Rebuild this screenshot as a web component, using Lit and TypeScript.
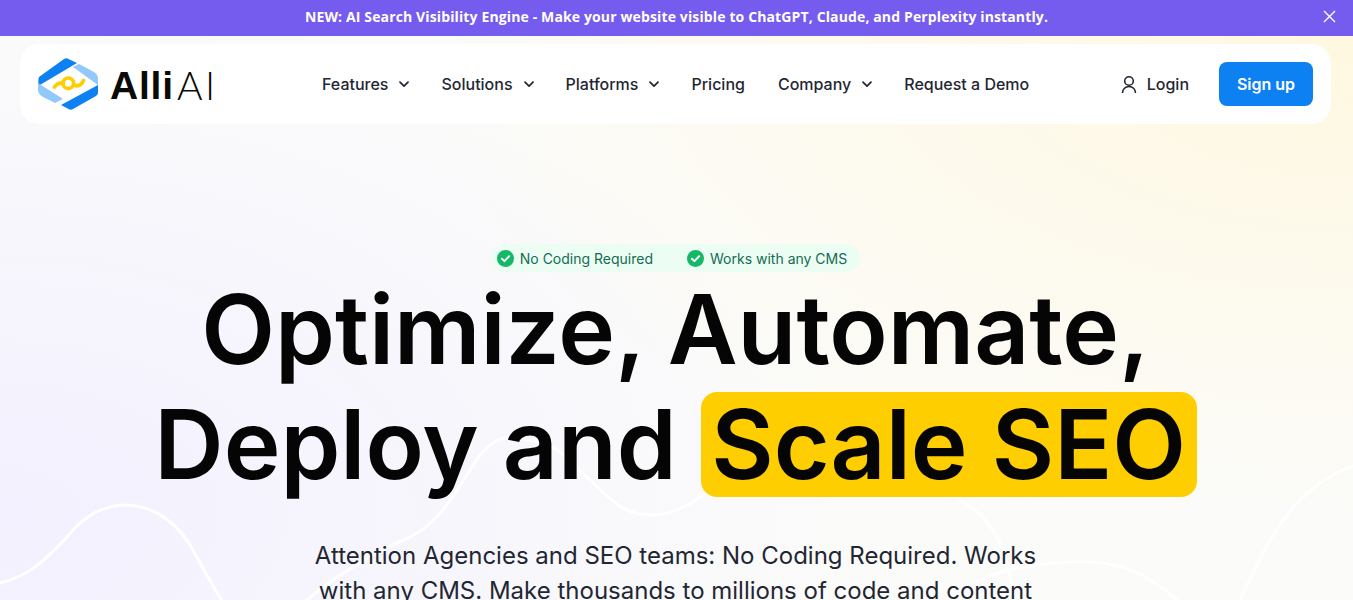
import { LitElement, html, css, svg } from 'lit';
import { customElement } from 'lit/decorators.js';

const chevron = html`<svg class="chev" width="10" height="7" viewBox="0 0 10 7"><path d="M1 1.200 5 5.200l4-4" fill="none" stroke="#1f2733" stroke-width="1.700" stroke-linecap="round" stroke-linejoin="round"/></svg>`;

const check = html`<svg width="17" height="17" viewBox="0 0 16 16"><circle cx="8" cy="8" r="8" fill="#14b866"/><path d="M4.600 8.200 7 10.500l4.400-4.600" fill="none" stroke="#fff" stroke-width="1.800" stroke-linecap="round" stroke-linejoin="round"/></svg>`;

// decorative lines behind the hero, in page coordinates
const waves = svg`
  <path d="M-5 584C30 578 50 555 67 537 85 515 105 505 125 505 155 505 178 525 190 545 203 568 212 585 224 604" />
  <path d="M303 604C330 578 380 550 410 537 445 520 462 480 478 458 490 443 498 438 507 438 525 438 545 442 557 450 572 460 580 472 590 480 610 500 625 515 650 515 670 515 685 508 703 495 780 440 880 450 960 500 985 515 995 530 1003 550 1008 565 1012 585 1015 604" />
  <path d="M975 582C1000 570 1040 562 1083 562 1125 562 1150 575 1182 604" />
  <path d="M1238 604C1252 575 1262 555 1270 540 1285 515 1310 480 1356 465" />
`;

@customElement('app-root')
export class AppRoot extends LitElement {
  static styles = css`
    :host {
      display: block;
      height: 600px;
      overflow: hidden;
      font-family: Inter, "Liberation Sans", sans-serif;
      color: #1f2733;
    }
    .banner {
      height: 36px;
      padding-bottom: 3px;
      box-sizing: border-box;
      background: #755cef;
      color: #fff;
      display: flex;
      align-items: center;
      justify-content: center;
      position: relative;
      font-family: "Open Sans", sans-serif;
      font-size: 14px;
      letter-spacing: 0.13px;
      font-weight: 700;
    }
    .close {
      position: absolute;
      right: 17px;
      top: 10px;
      width: 13px;
      height: 13px;
    }
    .page {
      position: relative;
      height: 564px;
      overflow: hidden;
      background:
        radial-gradient(950px 500px at 100% 0%, #fff8e0 0%, rgba(255, 248, 224, 0) 100%),
        radial-gradient(850px 520px at 0% 85%, #f3f0ff 0%, rgba(243, 240, 255, 0) 100%),
        #fbfbfa;
    }
    .waves {
      position: absolute;
      left: 0;
      top: 0;
      width: 1353px;
      height: 564px;
    }
    .waves path {
      fill: none;
      stroke: #fff;
      stroke-width: 3;
    }
    .wrap {
      position: relative;
      padding: 8px 22px 0 20px;
    }
    nav {
      height: 80px;
      background: #fff;
      border-radius: 20px;
      display: flex;
      align-items: center;
      padding: 0 18px;
    }
    .logo {
      display: flex;
      align-items: center;
      gap: 11px;
      width: 284px;
      color: #0a0a0a;
      font-size: 39px;
      line-height: 1;
    }
    .word {
      display: flex;
      gap: 3px;
      margin-top: 2px;
    }
    .word b {
      font-family: "Liberation Sans", sans-serif;
      font-weight: 700;
      letter-spacing: 0.8px;
    }
    .word span {
      font-family: Lato, sans-serif;
      font-weight: 300;
      letter-spacing: 2.500px;
    }
    .menu {
      display: flex;
      gap: 33px;
      font-size: 16px;
      font-weight: 500;
      flex: 1;
    }
    .item {
      display: flex;
      align-items: center;
      gap: 11px;
    }
    .chev {
      margin-right: -1px;
    }
    .login {
      display: flex;
      align-items: center;
      gap: 9px;
      font-size: 16px;
      font-weight: 500;
      margin-right: 30px;
    }
    .signup {
      width: 94px;
      height: 44px;
      background: #0d80f2;
      color: #fff;
      border-radius: 8px;
      display: flex;
      align-items: center;
      justify-content: center;
      font-size: 16px;
      font-weight: 600;
    }
    .hero {
      display: flex;
      flex-direction: column;
      align-items: center;
      padding-top: 120px;
      text-align: center;
    }
    .pills {
      height: 28px;
      display: flex;
      align-items: center;
      gap: 34px;
      padding: 0 13px 0 6px;
      background: #ecfdf3;
      border-radius: 14px;
      font-size: 14px;
      color: #146c54;
    }
    .pill {
      display: flex;
      align-items: center;
      gap: 6px;
    }
    h1 {
      margin: 0;
      font-size: 96px;
      line-height: 115px;
      font-weight: 600;
      color: #050505;
    }
    .mark {
      display: inline-block;
      background: #ffce00;
      border-radius: 16px;
      padding: 0 10.500px;
      line-height: 105px;
    }
    p {
      margin: 36px 0 0;
      width: 740px;
      font-size: 24px;
      line-height: 35px;
      color: #1f2733;
    }
  `;

  render() {
    return html`
      <div class="banner">
        NEW: AI Search Visibility Engine - Make your website visible to ChatGPT, Claude, and Perplexity instantly.
        <svg class="close" viewBox="0 0 13 13"><path d="M1 1l11 11M12 1 1 12" stroke="#fff" stroke-width="1.400" fill="none"/></svg>
      </div>
      <div class="page">
        <svg class="waves" viewBox="0 36 1353 564">${waves}</svg>
        <div class="wrap">
          <nav>
            <div class="logo">
              <svg width="61" height="54" viewBox="38 57 61 54">
                <path d="M39 77 64 59c1.500-1 3-1 4.500 0L77 63 39 85.500c-.800-2-1-6 0-8.500Z" fill="#0d80f2"/>
                <path d="M73 67l6-3 15 8c3 2 4 4 4 7v6Z" fill="#93c8fc"/>
                <path d="M98 85v8c0 1-1 2-2 3L73 109c-1.500 1-3 1-4.500 0L61 105Z" fill="#0d80f2"/>
                <path d="M38 83 63 99l-8 4-12-6c-3-2-5-4-5-7Z" fill="#93c8fc"/>
                <path d="M54.500 87c2-3 5-4.500 8.500-3.500M74 85c4 2 7.500 0 9.500-4.500" fill="none" stroke="#ffce00" stroke-width="3.800" stroke-linecap="round"/>
                <circle cx="68.300" cy="83.300" r="5.300" fill="none" stroke="#ffce00" stroke-width="3.600"/>
              </svg>
              <div class="word"><b>Alli</b><span>AI</span></div>
            </div>
            <div class="menu">
              <div class="item">Features ${chevron}</div>
              <div class="item">Solutions ${chevron}</div>
              <div class="item">Platforms ${chevron}</div>
              <div class="item">Pricing</div>
              <div class="item">Company ${chevron}</div>
              <div class="item">Request a Demo</div>
            </div>
            <div class="login">
              <svg width="18" height="19" viewBox="0 0 18 19"><circle cx="9" cy="6" r="4.300" fill="none" stroke="#1f2733" stroke-width="1.600"/><path d="M2.500 18c0-4 3-6.500 6.500-6.500s6.500 2.500 6.500 6.500" fill="none" stroke="#1f2733" stroke-width="1.600"/></svg>
              Login
            </div>
            <div class="signup">Sign up</div>
          </nav>
          <div class="hero">
            <div class="pills">
              <div class="pill">${check} No Coding Required</div>
              <div class="pill">${check} Works with any CMS</div>
            </div>
            <h1>Optimize, Automate,<br />Deploy and <span class="mark">Scale SEO</span></h1>
            <p>Attention Agencies and SEO teams: No Coding Required. Works with any CMS. Make thousands to millions of code and content</p>
          </div>
        </div>
      </div>
    `;
  }
}
